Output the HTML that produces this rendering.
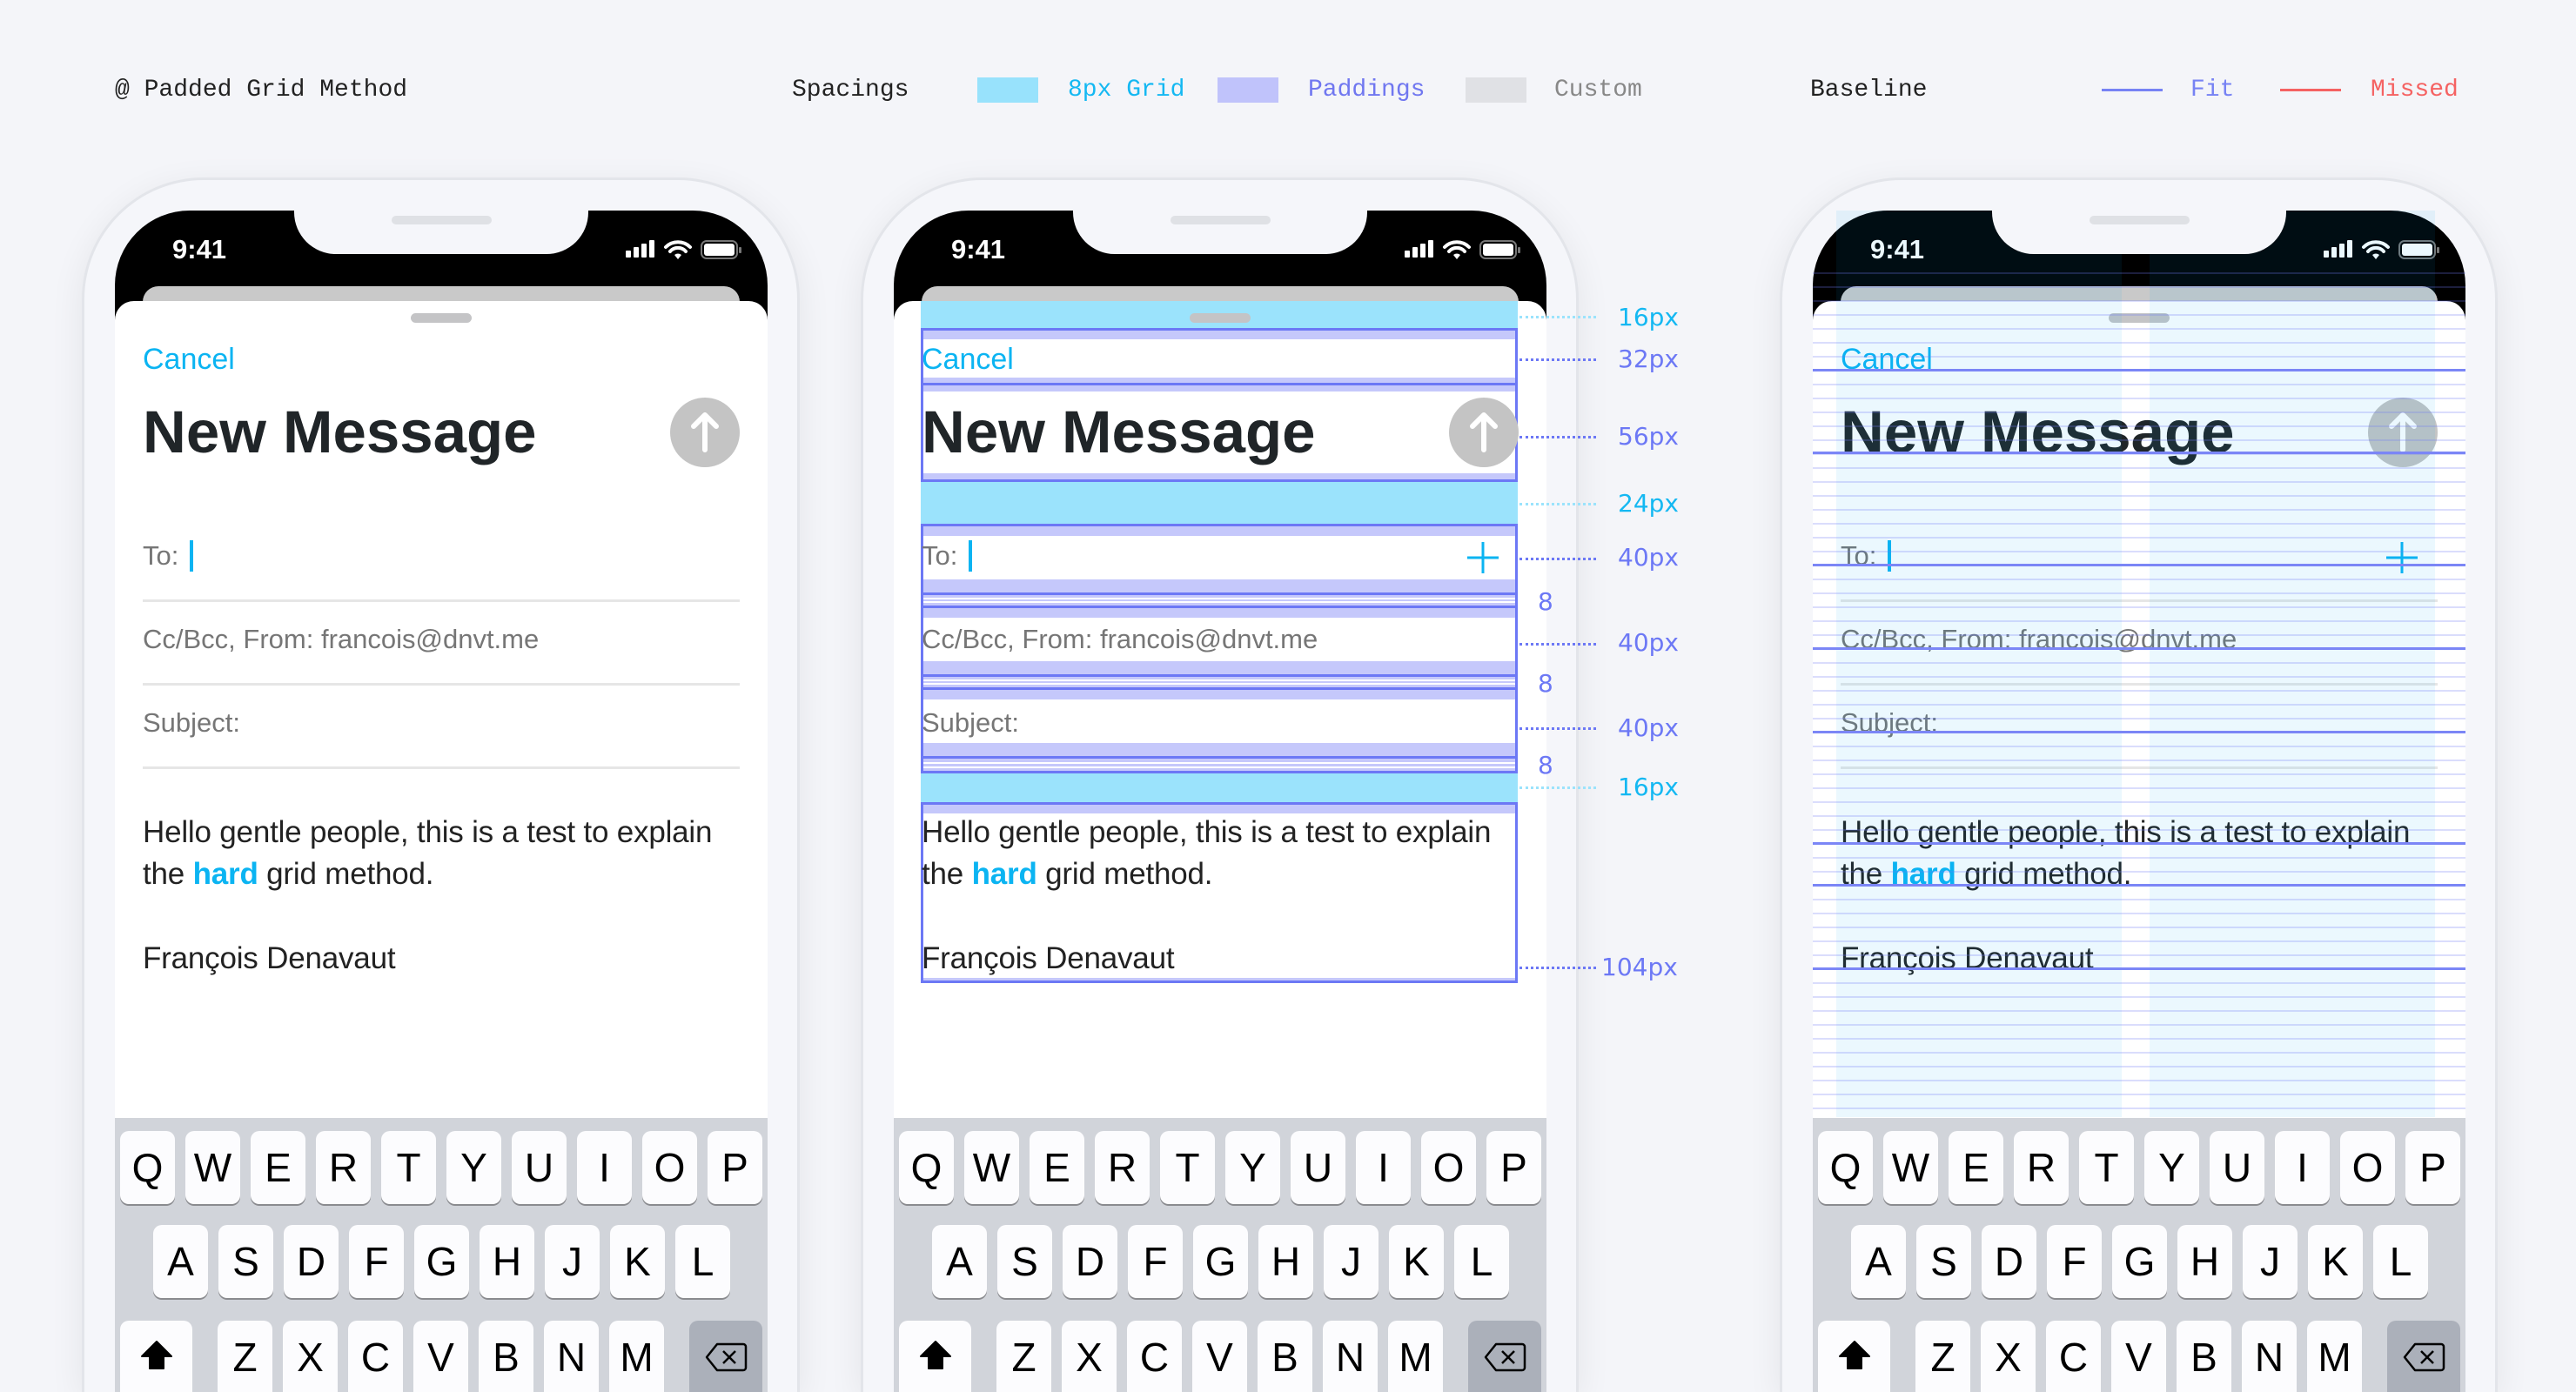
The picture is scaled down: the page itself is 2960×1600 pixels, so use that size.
<!DOCTYPE html>
<html><head><meta charset="utf-8">
<style>
*{margin:0;padding:0;box-sizing:border-box}
html,body{width:2960px;height:1600px;overflow:hidden}
body{background:#f4f5f9;position:relative;font-family:"Liberation Sans",Arial,sans-serif}
.a{position:absolute}
.hd{position:absolute;top:88px;font-family:"Liberation Mono",monospace;font-size:28px;line-height:32px;white-space:nowrap}
.sw{position:absolute;top:89px;width:70px;height:29px}
.ln{position:absolute;top:102px;width:70px;height:3px}
.ph{position:absolute;top:0;width:1000px;height:1600px;overflow:hidden}
.frame{position:absolute;left:94px;top:204px;width:825px;height:1396px;border:3px solid #e3e5ea;border-bottom:none;border-radius:140px 140px 0 0;background:#f5f6fa;box-shadow:0 10px 40px rgba(0,0,0,.07)}
.scr{position:absolute;left:132px;top:242px;width:750px;height:1358px;background:#000;border-radius:86px 86px 0 0;overflow:hidden}
.notch{position:absolute;left:338px;top:242px;width:338px;height:50px;background:#f5f6fa;border-radius:0 0 48px 48px}
.spk{position:absolute;left:450px;top:248px;width:115px;height:10px;border-radius:5px;background:#dfe1e5}
.time{position:absolute;left:198px;top:270px;color:#fff;font-size:31px;font-weight:bold;line-height:34px}
.back{position:absolute;left:164px;top:329px;width:686px;height:40px;background:#c9c9c9;border-radius:18px 18px 0 0}
.sheet{position:absolute;left:132px;top:346px;width:750px;height:1254px;background:#fff;border-radius:22px 22px 0 0}
.hdl{position:absolute;left:472px;top:360px;width:70px;height:11px;border-radius:6px;background:#c4c4c6}
.t{position:absolute;white-space:nowrap;line-height:1}
.cancel{left:164px;top:396px;font-size:34px;color:#0bb4f2}
.title{left:164px;top:462px;font-size:69px;font-weight:bold;color:#202528}
.f{left:164px;font-size:31px;color:#767676}
.body{left:164px;font-size:35px;color:#222;letter-spacing:-0.2px}
.div{position:absolute;left:164px;width:686px;height:3px;background:#e6e6e6}
.send{position:absolute;left:770px;top:457px;width:80px;height:80px;border-radius:50%;background:#c4c4c4}
.cur{position:absolute;left:218px;top:621px;width:4px;height:36px;background:#0bb4f2}
.kb{position:absolute;left:132px;top:1285px;width:750px;height:315px;background:#d1d4da;overflow:hidden}
.k{position:absolute;width:63px;height:84px;background:#fcfcfe;border-radius:10px;box-shadow:0 2px 0 #8a8b8f;font-size:46px;line-height:84px;text-align:center;color:#000}
.r3{height:82px;border-radius:10px 10px 0 0;box-shadow:none}
.lab{position:absolute;font-family:"DejaVu Sans",sans-serif;font-size:28px;line-height:30px;white-space:nowrap}
.dot{position:absolute;height:0;border-top:3px dotted}
.bx{position:absolute;left:1058px;width:686px;border:3px solid #6c78f5;background:#fff}
.cy{position:absolute;left:1058px;width:686px;background:#9be3fc}
.lv{position:absolute;left:0;width:100%;background:#c5c8fb}
</style></head><body>

<div class="hd" style="left:132px;color:#222">@ Padded Grid Method</div>
<div class="hd" style="left:910px;color:#222">Spacings</div>
<div class="sw" style="left:1123px;background:#98e2fc"></div>
<div class="hd" style="left:1227px;color:#14b8f2">8px Grid</div>
<div class="sw" style="left:1399px;background:#c0c3fb"></div>
<div class="hd" style="left:1503px;color:#7077f0">Paddings</div>
<div class="sw" style="left:1684px;background:#e0e1e5"></div>
<div class="hd" style="left:1786px;color:#888">Custom</div>
<div class="hd" style="left:2080px;color:#222">Baseline</div>
<div class="ln" style="left:2415px;background:#7682f4"></div>
<div class="hd" style="left:2517px;color:#7682f4">Fit</div>
<div class="ln" style="left:2620px;background:#f56262"></div>
<div class="hd" style="left:2724px;color:#f56262">Missed</div>

<div class="ph" style="left:0">
 <div class="frame"></div><div class="scr"></div><div class="notch"></div><div class="spk"></div>
 <div class="time">9:41</div>
 <svg class="a" style="left:716px;top:274px" width="140" height="28" viewBox="0 0 140 28"><rect x="3" y="14" width="6" height="8" rx="1" fill="#fff"/><rect x="12" y="10" width="6" height="12" rx="1" fill="#fff"/><rect x="21" y="6" width="6" height="16" rx="1" fill="#fff"/><rect x="30" y="2" width="6" height="20" rx="1" fill="#fff"/><path d="M49 10a20 20 0 0 1 28 0M54 15a12 12 0 0 1 18 0" stroke="#fff" stroke-width="4" fill="none" stroke-linecap="round"/><path d="M59 19l4 5 4-5a6 6 0 0 0-8 0z" fill="#fff"/><rect x="90" y="3" width="41" height="20" rx="6" stroke="#777" stroke-width="2" fill="none"/><rect x="93" y="6" width="35" height="14" rx="3" fill="#fff"/><rect x="133" y="10" width="3" height="7" rx="1" fill="#777"/></svg>
 <div class="back"></div><div class="sheet"></div><div class="hdl"></div>
 <div class="t cancel">Cancel</div>
 <div class="t title">New Message</div>
 <div class="send"></div>
 <svg class="a" style="left:770px;top:457px" width="80" height="80"><path d="M40 60V20M27 33L40 20L53 33" stroke="#fff" stroke-width="6" fill="none" stroke-linecap="round" stroke-linejoin="round"/></svg>
 <div class="t f" style="top:623px">To:</div><div class="cur"></div>
 <div class="div" style="top:689px"></div>
 <div class="t f" style="top:719px">Cc/Bcc, From: francois@dnvt.me</div>
 <div class="div" style="top:785px"></div>
 <div class="t f" style="top:815px">Subject:</div>
 <div class="div" style="top:881px"></div>
 <div class="t body" style="top:939px">Hello gentle people, this is a test to explain</div>
 <div class="t body" style="top:987px">the <b style="color:#0bb4f2">hard</b> grid method.</div>
 <div class="t body" style="top:1084px">François Denavaut</div>
 <div class="kb"></div>
 <div class="k" style="left:138px;top:1300px">Q</div><div class="k" style="left:213px;top:1300px">W</div><div class="k" style="left:288px;top:1300px">E</div><div class="k" style="left:363px;top:1300px">R</div><div class="k" style="left:438px;top:1300px">T</div><div class="k" style="left:513px;top:1300px">Y</div><div class="k" style="left:588px;top:1300px">U</div><div class="k" style="left:663px;top:1300px">I</div><div class="k" style="left:738px;top:1300px">O</div><div class="k" style="left:813px;top:1300px">P</div>
 <div class="k" style="left:176px;top:1408px">A</div><div class="k" style="left:251px;top:1408px">S</div><div class="k" style="left:326px;top:1408px">D</div><div class="k" style="left:401px;top:1408px">F</div><div class="k" style="left:476px;top:1408px">G</div><div class="k" style="left:551px;top:1408px">H</div><div class="k" style="left:626px;top:1408px">J</div><div class="k" style="left:701px;top:1408px">K</div><div class="k" style="left:776px;top:1408px">L</div>
 <div class="k r3" style="left:138px;top:1518px;width:83px"><svg width="40" height="40" style="margin-top:20px"><path d="M20 4L37 21H28V35H12V21H3Z" fill="#000" stroke="#000" stroke-linejoin="round" stroke-width="2"/></svg></div>
 <div class="k r3" style="left:250px;top:1518px">Z</div><div class="k r3" style="left:325px;top:1518px">X</div><div class="k r3" style="left:400px;top:1518px">C</div><div class="k r3" style="left:475px;top:1518px">V</div><div class="k r3" style="left:550px;top:1518px">B</div><div class="k r3" style="left:625px;top:1518px">N</div><div class="k r3" style="left:700px;top:1518px">M</div>
 <div class="k r3" style="left:792px;top:1518px;width:84px;background:#abb0ba"><svg width="50" height="36" style="margin-top:24px"><path d="M15 3H45a3 3 0 0 1 3 3V30a3 3 0 0 1-3 3H15L3 18Z" fill="none" stroke="#000" stroke-width="2.5" stroke-linejoin="round"/><path d="M22 11l14 14M36 11L22 25" stroke="#000" stroke-width="2.5"/></svg></div>
</div>

<div class="ph" style="left:895px">
 <div class="frame"></div><div class="scr"></div><div class="notch"></div><div class="spk"></div>
 <div class="time">9:41</div>
 <svg class="a" style="left:716px;top:274px" width="140" height="28" viewBox="0 0 140 28"><rect x="3" y="14" width="6" height="8" rx="1" fill="#fff"/><rect x="12" y="10" width="6" height="12" rx="1" fill="#fff"/><rect x="21" y="6" width="6" height="16" rx="1" fill="#fff"/><rect x="30" y="2" width="6" height="20" rx="1" fill="#fff"/><path d="M49 10a20 20 0 0 1 28 0M54 15a12 12 0 0 1 18 0" stroke="#fff" stroke-width="4" fill="none" stroke-linecap="round"/><path d="M59 19l4 5 4-5a6 6 0 0 0-8 0z" fill="#fff"/><rect x="90" y="3" width="41" height="20" rx="6" stroke="#777" stroke-width="2" fill="none"/><rect x="93" y="6" width="35" height="14" rx="3" fill="#fff"/><rect x="133" y="10" width="3" height="7" rx="1" fill="#777"/></svg>
 <div class="back"></div><div class="sheet"></div>
 <div class="kb"></div>
 <div class="k" style="left:138px;top:1300px">Q</div><div class="k" style="left:213px;top:1300px">W</div><div class="k" style="left:288px;top:1300px">E</div><div class="k" style="left:363px;top:1300px">R</div><div class="k" style="left:438px;top:1300px">T</div><div class="k" style="left:513px;top:1300px">Y</div><div class="k" style="left:588px;top:1300px">U</div><div class="k" style="left:663px;top:1300px">I</div><div class="k" style="left:738px;top:1300px">O</div><div class="k" style="left:813px;top:1300px">P</div>
 <div class="k" style="left:176px;top:1408px">A</div><div class="k" style="left:251px;top:1408px">S</div><div class="k" style="left:326px;top:1408px">D</div><div class="k" style="left:401px;top:1408px">F</div><div class="k" style="left:476px;top:1408px">G</div><div class="k" style="left:551px;top:1408px">H</div><div class="k" style="left:626px;top:1408px">J</div><div class="k" style="left:701px;top:1408px">K</div><div class="k" style="left:776px;top:1408px">L</div>
 <div class="k r3" style="left:138px;top:1518px;width:83px"><svg width="40" height="40" style="margin-top:20px"><path d="M20 4L37 21H28V35H12V21H3Z" fill="#000" stroke="#000" stroke-linejoin="round" stroke-width="2"/></svg></div>
 <div class="k r3" style="left:250px;top:1518px">Z</div><div class="k r3" style="left:325px;top:1518px">X</div><div class="k r3" style="left:400px;top:1518px">C</div><div class="k r3" style="left:475px;top:1518px">V</div><div class="k r3" style="left:550px;top:1518px">B</div><div class="k r3" style="left:625px;top:1518px">N</div><div class="k r3" style="left:700px;top:1518px">M</div>
 <div class="k r3" style="left:792px;top:1518px;width:84px;background:#abb0ba"><svg width="50" height="36" style="margin-top:24px"><path d="M15 3H45a3 3 0 0 1 3 3V30a3 3 0 0 1-3 3H15L3 18Z" fill="none" stroke="#000" stroke-width="2.5" stroke-linejoin="round"/><path d="M22 11l14 14M36 11L22 25" stroke="#000" stroke-width="2.5"/></svg></div>
</div>
<div class="cy" style="top:346px;height:32px"></div>
<div class="a" style="left:1367px;top:360px;width:70px;height:11px;border-radius:6px;background:#c4c4c6"></div>
<div class="bx" style="top:377px;height:66px"><div class="lv" style="top:0;height:10px"></div><div class="lv" style="bottom:0;height:6px"></div></div>
<div class="bx" style="top:440px;height:114px"><div class="lv" style="top:0;height:7px"></div><div class="lv" style="bottom:0;height:7px"></div></div>
<div class="cy" style="top:554px;height:48px"></div>
<div class="bx" style="top:602px;height:82px"><div class="lv" style="top:0;height:11px"></div><div class="lv" style="bottom:0;height:15px"></div></div>
<div class="bx" style="top:681px;height:18px;background:#c5c8fb"><div class="a" style="left:0;right:0;top:3px;height:2px;background:#fff"></div><div class="a" style="left:0;right:0;top:7px;height:2px;background:#fff"></div></div>
<div class="bx" style="top:696px;height:82px"><div class="lv" style="top:0;height:11px"></div><div class="lv" style="bottom:0;height:15px"></div></div>
<div class="bx" style="top:775px;height:18px;background:#c5c8fb"><div class="a" style="left:0;right:0;top:3px;height:2px;background:#fff"></div><div class="a" style="left:0;right:0;top:7px;height:2px;background:#fff"></div></div>
<div class="bx" style="top:790px;height:82px"><div class="lv" style="top:0;height:11px"></div><div class="lv" style="bottom:0;height:15px"></div></div>
<div class="bx" style="top:869px;height:20px;background:#c5c8fb"><div class="a" style="left:0;right:0;top:4px;height:2px;background:#fff"></div><div class="a" style="left:0;right:0;top:9px;height:2px;background:#fff"></div></div>
<div class="cy" style="top:889px;height:34px"></div>
<div class="bx" style="top:922px;height:208px"><div class="lv" style="top:0;height:10px"></div><div class="lv" style="bottom:0;height:3px"></div></div>
<div class="t" style="left:1059px;top:396px;font-size:34px;color:#0bb4f2">Cancel</div>
<div class="t" style="left:1059px;top:462px;font-size:69px;font-weight:bold;color:#202528">New Message</div>
<div class="a" style="left:1665px;top:457px;width:80px;height:80px;border-radius:50%;background:#c4c4c4"></div>
<svg class="a" style="left:1665px;top:457px" width="80" height="80"><path d="M40 60V20M27 33L40 20L53 33" stroke="#fff" stroke-width="6" fill="none" stroke-linecap="round" stroke-linejoin="round"/></svg>
<div class="t f" style="left:1059px;top:623px">To:</div><div class="a" style="left:1113px;top:621px;width:4px;height:36px;background:#0bb4f2"></div>
<svg class="a" style="left:1685px;top:622px" width="38" height="38"><path d="M19 1V37M1 19H37" stroke="#0bb4f2" stroke-width="3"/></svg>
<div class="t f" style="left:1059px;top:719px">Cc/Bcc, From: francois@dnvt.me</div>
<div class="t f" style="left:1059px;top:815px">Subject:</div>
<div class="t body" style="left:1059px;top:939px">Hello gentle people, this is a test to explain</div>
<div class="t body" style="left:1059px;top:987px">the <b style="color:#0bb4f2">hard</b> grid method.</div>
<div class="t body" style="left:1059px;top:1084px">François Denavaut</div>
<div class="dot" style="left:1746px;width:88px;top:363px;border-color:#9be3fc"></div><div class="lab" style="left:1859px;top:350px;color:#14b8f2">16px</div>
<div class="dot" style="left:1746px;width:88px;top:412px;border-color:#6c78f5"></div><div class="lab" style="left:1859px;top:398px;color:#6c78f5">32px</div>
<div class="dot" style="left:1746px;width:88px;top:501px;border-color:#6c78f5"></div><div class="lab" style="left:1859px;top:487px;color:#6c78f5">56px</div>
<div class="dot" style="left:1746px;width:88px;top:578px;border-color:#9be3fc"></div><div class="lab" style="left:1859px;top:564px;color:#14b8f2">24px</div>
<div class="dot" style="left:1746px;width:88px;top:641px;border-color:#6c78f5"></div><div class="lab" style="left:1859px;top:626px;color:#6c78f5">40px</div>
<div class="lab" style="left:1767px;top:677px;color:#6c78f5">8</div>
<div class="dot" style="left:1746px;width:88px;top:739px;border-color:#6c78f5"></div><div class="lab" style="left:1859px;top:724px;color:#6c78f5">40px</div>
<div class="lab" style="left:1767px;top:771px;color:#6c78f5">8</div>
<div class="dot" style="left:1746px;width:88px;top:836px;border-color:#6c78f5"></div><div class="lab" style="left:1859px;top:822px;color:#6c78f5">40px</div>
<div class="lab" style="left:1767px;top:865px;color:#6c78f5">8</div>
<div class="dot" style="left:1746px;width:88px;top:904px;border-color:#9be3fc"></div><div class="lab" style="left:1859px;top:890px;color:#14b8f2">16px</div>
<div class="dot" style="left:1746px;width:88px;top:1111px;border-color:#6c78f5"></div><div class="lab" style="left:1840px;top:1097px;color:#6c78f5">104px</div>

<div class="ph" style="left:1951px">
 <div class="frame"></div><div class="scr"></div>
 <div class="time">9:41</div>
 <svg class="a" style="left:716px;top:274px" width="140" height="28" viewBox="0 0 140 28"><rect x="3" y="14" width="6" height="8" rx="1" fill="#fff"/><rect x="12" y="10" width="6" height="12" rx="1" fill="#fff"/><rect x="21" y="6" width="6" height="16" rx="1" fill="#fff"/><rect x="30" y="2" width="6" height="20" rx="1" fill="#fff"/><path d="M49 10a20 20 0 0 1 28 0M54 15a12 12 0 0 1 18 0" stroke="#fff" stroke-width="4" fill="none" stroke-linecap="round"/><path d="M59 19l4 5 4-5a6 6 0 0 0-8 0z" fill="#fff"/><rect x="90" y="3" width="41" height="20" rx="6" stroke="#777" stroke-width="2" fill="none"/><rect x="93" y="6" width="35" height="14" rx="3" fill="#fff"/><rect x="133" y="10" width="3" height="7" rx="1" fill="#777"/></svg>
 <div class="back"></div><div class="sheet"></div><div class="hdl"></div>
 <div class="t cancel">Cancel</div>
 <div class="t title">New Message</div>
 <div class="send"></div>
 <svg class="a" style="left:770px;top:457px" width="80" height="80"><path d="M40 60V20M27 33L40 20L53 33" stroke="#fff" stroke-width="6" fill="none" stroke-linecap="round" stroke-linejoin="round"/></svg>
 <div class="t f" style="top:623px">To:</div><div class="cur"></div>
 <svg class="a" style="left:790px;top:622px" width="38" height="38"><path d="M19 1V37M1 19H37" stroke="#0bb4f2" stroke-width="3"/></svg>
 <div class="div" style="top:689px"></div>
 <div class="t f" style="top:719px">Cc/Bcc, From: francois@dnvt.me</div>
 <div class="div" style="top:785px"></div>
 <div class="t f" style="top:815px">Subject:</div>
 <div class="div" style="top:881px"></div>
 <div class="t body" style="top:939px">Hello gentle people, this is a test to explain</div>
 <div class="t body" style="top:987px">the <b style="color:#0bb4f2">hard</b> grid method.</div>
 <div class="t body" style="top:1084px">François Denavaut</div>
 <div class="a" style="left:159px;top:242px;width:328px;height:1042px;background:rgba(0,170,240,.08)"></div>
 <div class="a" style="left:519px;top:242px;width:328px;height:1042px;background:rgba(0,170,240,.08)"></div>
 <div class="a" style="left:132px;top:313px;width:750px;height:971px;background:repeating-linear-gradient(to bottom,rgba(110,120,245,.25) 0,rgba(110,120,245,.25) 2px,transparent 2px,transparent 16px)"></div>
 <div class="a" style="left:132px;top:424px;width:750px;height:3px;background:#7b86f6"></div>
 <div class="a" style="left:132px;top:519px;width:750px;height:3px;background:#7b86f6"></div>
 <div class="a" style="left:132px;top:648px;width:750px;height:3px;background:#7b86f6"></div>
 <div class="a" style="left:132px;top:744px;width:750px;height:3px;background:#7b86f6"></div>
 <div class="a" style="left:132px;top:840px;width:750px;height:3px;background:#7b86f6"></div>
 <div class="a" style="left:132px;top:968px;width:750px;height:3px;background:#7b86f6"></div>
 <div class="a" style="left:132px;top:1016px;width:750px;height:3px;background:#7b86f6"></div>
 <div class="a" style="left:132px;top:1112px;width:750px;height:3px;background:#7b86f6"></div>
 <div class="notch"></div><div class="spk"></div>
 <div class="kb"></div>
 <div class="k" style="left:138px;top:1300px">Q</div><div class="k" style="left:213px;top:1300px">W</div><div class="k" style="left:288px;top:1300px">E</div><div class="k" style="left:363px;top:1300px">R</div><div class="k" style="left:438px;top:1300px">T</div><div class="k" style="left:513px;top:1300px">Y</div><div class="k" style="left:588px;top:1300px">U</div><div class="k" style="left:663px;top:1300px">I</div><div class="k" style="left:738px;top:1300px">O</div><div class="k" style="left:813px;top:1300px">P</div>
 <div class="k" style="left:176px;top:1408px">A</div><div class="k" style="left:251px;top:1408px">S</div><div class="k" style="left:326px;top:1408px">D</div><div class="k" style="left:401px;top:1408px">F</div><div class="k" style="left:476px;top:1408px">G</div><div class="k" style="left:551px;top:1408px">H</div><div class="k" style="left:626px;top:1408px">J</div><div class="k" style="left:701px;top:1408px">K</div><div class="k" style="left:776px;top:1408px">L</div>
 <div class="k r3" style="left:138px;top:1518px;width:83px"><svg width="40" height="40" style="margin-top:20px"><path d="M20 4L37 21H28V35H12V21H3Z" fill="#000" stroke="#000" stroke-linejoin="round" stroke-width="2"/></svg></div>
 <div class="k r3" style="left:250px;top:1518px">Z</div><div class="k r3" style="left:325px;top:1518px">X</div><div class="k r3" style="left:400px;top:1518px">C</div><div class="k r3" style="left:475px;top:1518px">V</div><div class="k r3" style="left:550px;top:1518px">B</div><div class="k r3" style="left:625px;top:1518px">N</div><div class="k r3" style="left:700px;top:1518px">M</div>
 <div class="k r3" style="left:792px;top:1518px;width:84px;background:#abb0ba"><svg width="50" height="36" style="margin-top:24px"><path d="M15 3H45a3 3 0 0 1 3 3V30a3 3 0 0 1-3 3H15L3 18Z" fill="none" stroke="#000" stroke-width="2.5" stroke-linejoin="round"/><path d="M22 11l14 14M36 11L22 25" stroke="#000" stroke-width="2.5"/></svg></div>
</div>
</body></html>
